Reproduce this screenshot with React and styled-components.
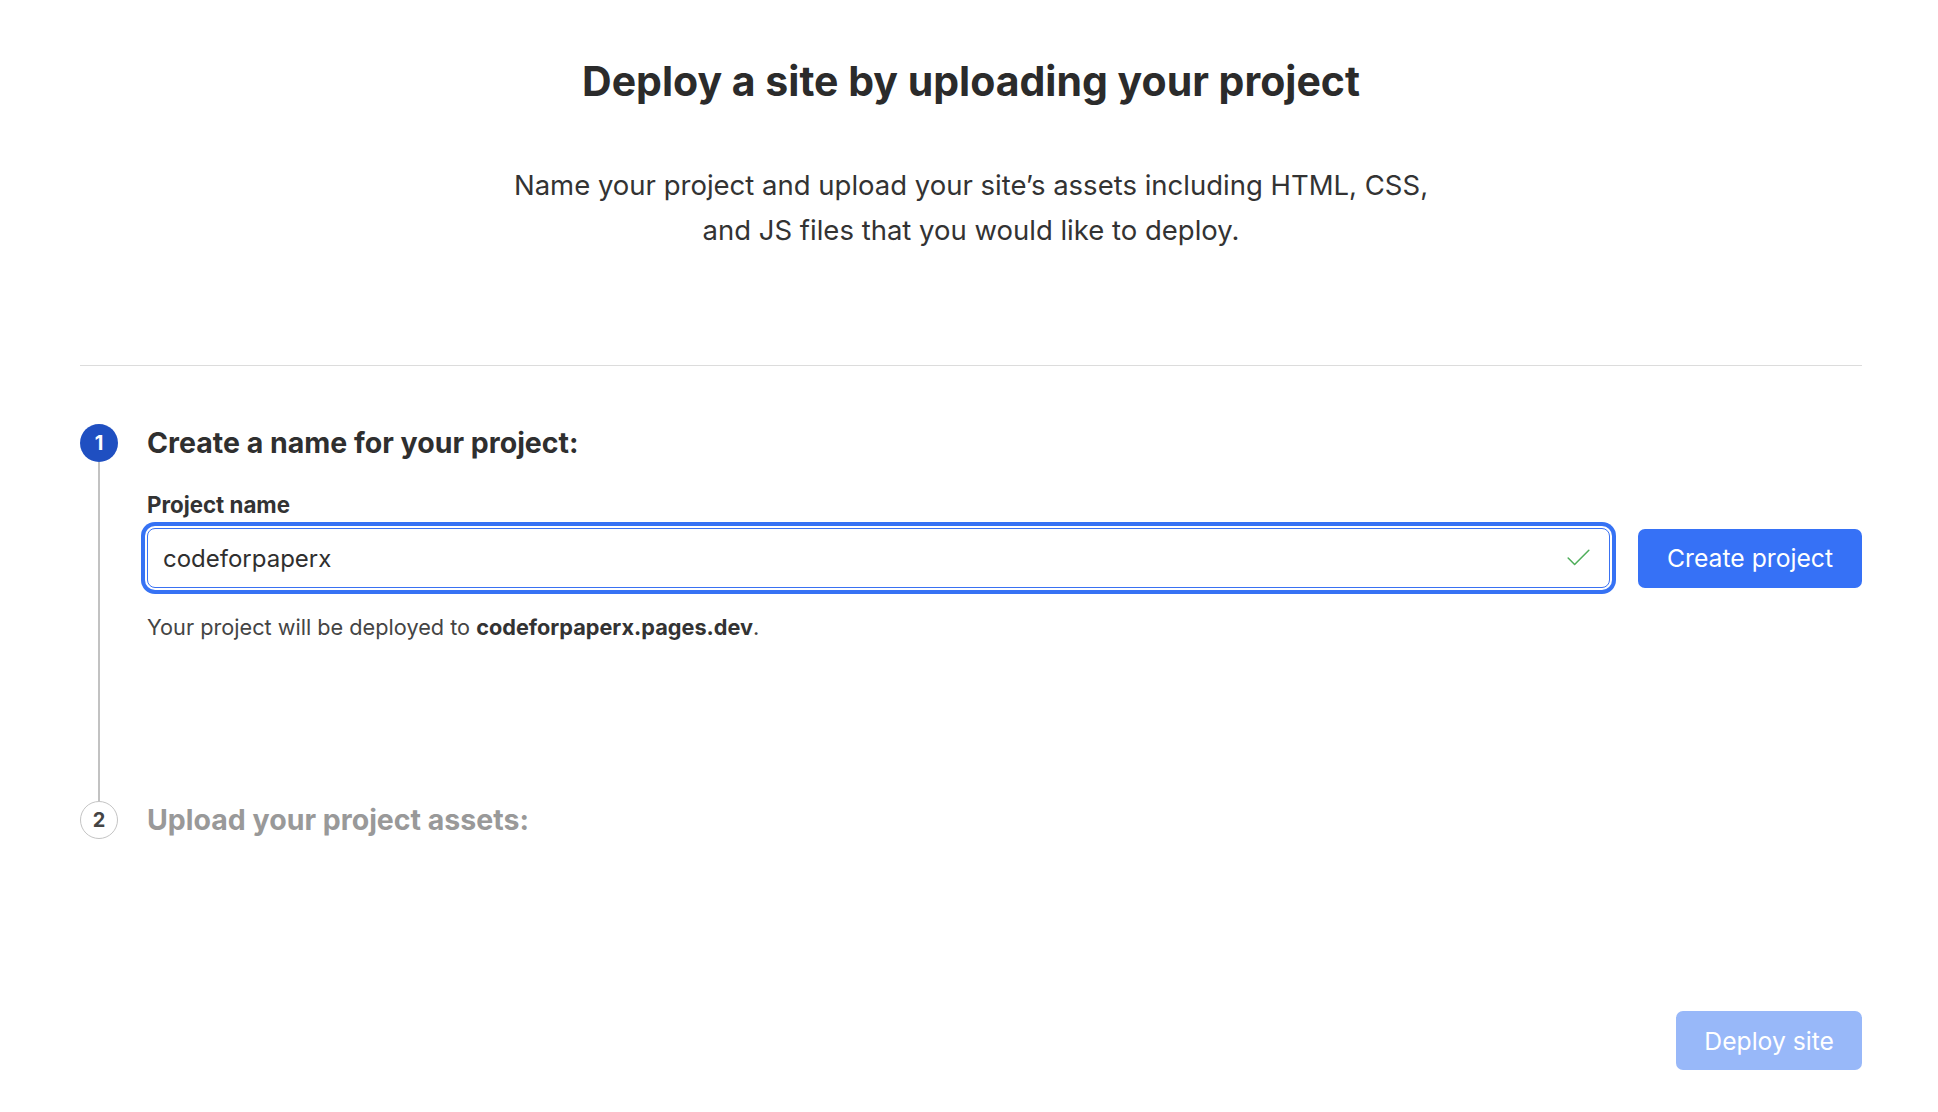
import React from 'react'
import styled, { createGlobalStyle } from 'styled-components'
import { Check } from 'lucide-react'

const GlobalStyle = createGlobalStyle`
    html, body {
        margin: 0;
        padding: 0;
        background: #ffffff;
    }
    body {
        font-family: Inter, "Noto Sans", "Liberation Sans", sans-serif;
        color: #2f2f2f;
        -webkit-font-smoothing: antialiased;
    }
`

const Page = styled.div`
    padding: 57px 76px 40px 80px;
    display: flex;
    flex-direction: column;
`

const Title = styled.h1`
    margin: 0;
    text-align: center;
    font-size: 41px;
    line-height: 48px;
    font-weight: 700;
    color: #2b2b2b;
`

const Intro = styled.p`
    margin: 58px auto 0;
    max-width: 1000px;
    text-align: center;
    font-size: 27.5px;
    line-height: 45px;
    font-weight: 400;
    color: #333333;
`

const Divider = styled.hr`
    margin: 112px 0 0;
    border: none;
    border-top: 1.5px solid #dcdcdc;
`

const Steps = styled.div`
    margin-top: 58px;
    display: flex;
    flex-direction: column;
`

const Step = styled.div`
    display: flex;
    gap: 29px;
    min-height: ${p => p.height || 'auto'};
`

const Rail = styled.div`
    width: 38px;
    display: flex;
    flex-direction: column;
    align-items: center;
    flex-shrink: 0;
`

const Badge = styled.div`
    width: 38px;
    height: 38px;
    border-radius: 50%;
    box-sizing: border-box;
    display: flex;
    align-items: center;
    justify-content: center;
    font-size: 20px;
    font-weight: 700;
    background: ${p => (p.active ? '#1f4fc1' : '#ffffff')};
    color: ${p => (p.active ? '#ffffff' : '#444444')};
    border: ${p => (p.active ? 'none' : '1.5px solid #c4c4c4')};
`

const RailLine = styled.div`
    flex: 1;
    width: 2px;
    background: #c2c2c2;
`

const StepBody = styled.div`
    flex: 1;
    display: flex;
    flex-direction: column;
`

const StepTitle = styled.h2`
    margin: 0;
    font-size: 28.5px;
    line-height: 38px;
    font-weight: 700;
    color: ${p => (p.muted ? '#999999' : '#2f2f2f')};
`

const FieldLabel = styled.label`
    margin-top: 30px;
    font-size: 22.3px;
    line-height: 26px;
    font-weight: 700;
    color: #333333;
`

const FieldRow = styled.div`
    margin-top: 10px;
    display: flex;
    align-items: center;
    gap: 28px;
`

const InputWrap = styled.div`
    position: relative;
    flex: 1;
`

const TextInput = styled.input`
    width: 100%;
    height: 60px;
    box-sizing: border-box;
    border: 1px solid #3a71f2;
    border-radius: 8px;
    box-shadow: 0 0 0 2px #ffffff, 0 0 0 6px #3672f4;
    padding: 0 60px 0 15px;
    font-family: inherit;
    font-size: 24px;
    color: #2f2f2f;
    outline: none;
    background: #ffffff;
`

const CheckMark = styled.span`
    position: absolute;
    right: 16px;
    top: 50%;
    transform: translateY(-50%);
    display: flex;
    color: #4fae5a;
`

const Button = styled.button`
    height: 59px;
    padding: 0 ${p => p.pad || '30px'};
    border: none;
    border-radius: 7px;
    font-family: inherit;
    font-size: 24.7px;
    font-weight: 400;
    color: #ffffff;
    background: ${p => (p.disabled ? '#98b8f9' : '#3671f6')};
    cursor: ${p => (p.disabled ? 'default' : 'pointer')};
`

const Hint = styled.p`
    margin: 25px 0 0;
    font-size: 21.7px;
    line-height: 28px;
    color: #444444;

    strong {
        font-weight: 700;
        color: #333333;
    }
`

const Footer = styled.div`
    margin-top: 172px;
    display: flex;
    justify-content: flex-end;
`

const App = () => {
    return <>
        <GlobalStyle />
        <Page>
            <Title>Deploy a site by uploading your project</Title>
            <Intro>
                Name your project and upload your site’s assets including HTML, CSS,<br />
                and JS files that you would like to deploy.
            </Intro>
            <Divider />
            <Steps>
                <Step height="377px">
                    <Rail>
                        <Badge active>1</Badge>
                        <RailLine />
                    </Rail>
                    <StepBody>
                        <StepTitle>Create a name for your project:</StepTitle>
                        <FieldLabel htmlFor="project-name">Project name</FieldLabel>
                        <FieldRow>
                            <InputWrap>
                                <TextInput id="project-name" defaultValue="codeforpaperx" />
                                <CheckMark><Check size={31} strokeWidth={1.2} /></CheckMark>
                            </InputWrap>
                            <Button pad="29px">Create project</Button>
                        </FieldRow>
                        <Hint>Your project will be deployed to <strong>codeforpaperx.pages.dev</strong>.</Hint>
                    </StepBody>
                </Step>
                <Step>
                    <Rail>
                        <Badge>2</Badge>
                    </Rail>
                    <StepBody>
                        <StepTitle muted>Upload your project assets:</StepTitle>
                    </StepBody>
                </Step>
            </Steps>
            <Footer>
                <Button disabled pad="28px">Deploy site</Button>
            </Footer>
        </Page>
    </>
}

export default App
